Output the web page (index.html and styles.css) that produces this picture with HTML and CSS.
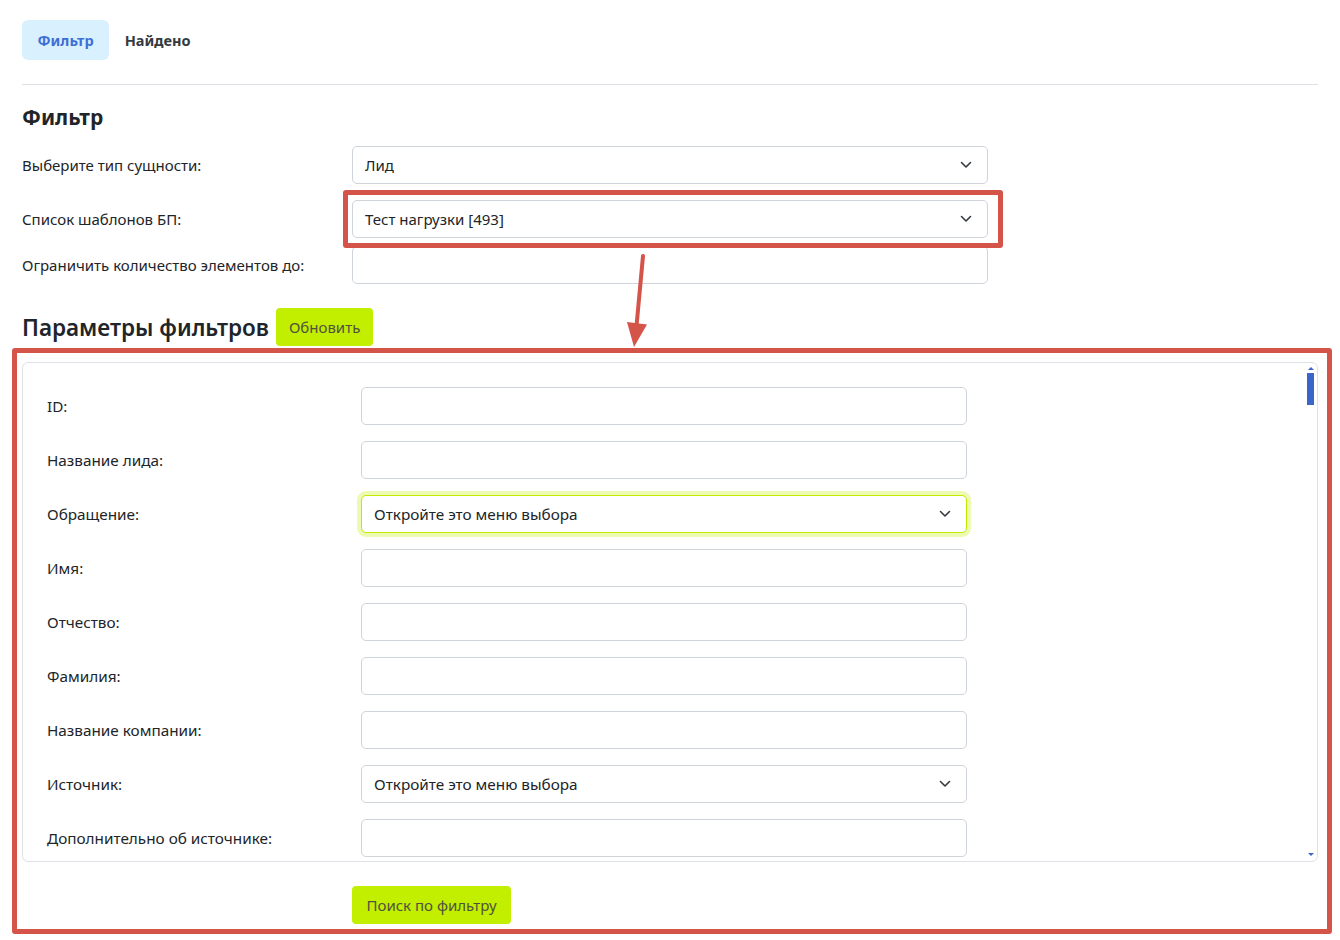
FILE: index.html
```html
<!DOCTYPE html>
<html lang="ru">
<head>
<meta charset="utf-8">
<title>Фильтр</title>
<link rel="stylesheet" href="styles.css">
</head>
<body>
<div class="page">
  <nav class="tabs">
    <a class="tab tab-active" href="#">Фильтр</a>
    <a class="tab" href="#">Найдено</a>
  </nav>
  <hr class="divider">

  <section class="filter">
    <h2 class="section-title">Фильтр</h2>
    <div class="field">
      <label class="field-label">Выберите тип сущности:</label>
      <div class="control select">
        <span>Лид</span>
        <svg class="chevron" width="12" height="8" viewBox="0 0 12 8"><polyline points="1.5,1.5 6,6 10.5,1.5" fill="none" stroke="#343a40" stroke-width="1.6" stroke-linecap="round" stroke-linejoin="round"/></svg>
      </div>
    </div>
    <div class="field field-tight">
      <label class="field-label">Список шаблонов БП:</label>
      <div class="control select marked">
        <span>Тест нагрузки [493]</span>
        <svg class="chevron" width="12" height="8" viewBox="0 0 12 8"><polyline points="1.5,1.5 6,6 10.5,1.5" fill="none" stroke="#343a40" stroke-width="1.6" stroke-linecap="round" stroke-linejoin="round"/></svg>
        <span class="mark-box mark-select"></span>
      </div>
    </div>
    <div class="field">
      <label class="field-label">Ограничить количество элементов до:</label>
      <input class="control input" type="text">
    </div>
  </section>

  <div class="params-head">
    <h2 class="params-title">Параметры фильтров</h2>
    <button class="btn-lime" type="button">Обновить</button>
  </div>

  <div class="params-body">
    <div class="params-scroll">
      <div class="param">
        <label class="param-label">ID:</label>
        <input class="param-control input" type="text">
      </div>
      <div class="param">
        <label class="param-label">Название лида:</label>
        <input class="param-control input" type="text">
      </div>
      <div class="param">
        <label class="param-label">Обращение:</label>
        <div class="param-control select select-focus">
          <span>Откройте это меню выбора</span>
          <svg class="chevron" width="12" height="8" viewBox="0 0 12 8"><polyline points="1.5,1.5 6,6 10.5,1.5" fill="none" stroke="#343a40" stroke-width="1.6" stroke-linecap="round" stroke-linejoin="round"/></svg>
        </div>
      </div>
      <div class="param">
        <label class="param-label">Имя:</label>
        <input class="param-control input" type="text">
      </div>
      <div class="param">
        <label class="param-label">Отчество:</label>
        <input class="param-control input" type="text">
      </div>
      <div class="param">
        <label class="param-label">Фамилия:</label>
        <input class="param-control input" type="text">
      </div>
      <div class="param">
        <label class="param-label">Название компании:</label>
        <input class="param-control input" type="text">
      </div>
      <div class="param">
        <label class="param-label">Источник:</label>
        <div class="param-control select">
          <span>Откройте это меню выбора</span>
          <svg class="chevron" width="12" height="8" viewBox="0 0 12 8"><polyline points="1.5,1.5 6,6 10.5,1.5" fill="none" stroke="#343a40" stroke-width="1.6" stroke-linecap="round" stroke-linejoin="round"/></svg>
        </div>
      </div>
      <div class="param">
        <label class="param-label">Дополнительно об источнике:</label>
        <input class="param-control input" type="text">
      </div>

      <div class="scrollbar">
        <span class="scroll-up"></span>
        <span class="scroll-thumb"></span>
        <span class="scroll-down"></span>
      </div>
    </div>

    <div class="params-actions">
      <button class="btn-lime btn-search" type="button">Поиск по фильтру</button>
    </div>

    <span class="mark-box mark-params"></span>
  </div>

  <!-- callout arrow from the template select down to the parameters block -->
  <svg class="callout-arrow" width="40" height="100" viewBox="0 0 40 100">
    <line x1="23" y1="6" x2="16.5" y2="76" stroke="#d4544a" stroke-width="4" stroke-linecap="round"/>
    <polygon points="7,72 27,74.5 14,97" fill="#d4544a"/>
  </svg>
</div>
</body>
</html>
```

FILE: styles.css
```css
* {
  box-sizing: border-box;
}

body {
  margin: 0;
  background: #ffffff;
  color: #212529;
  font-family: "Noto Sans", "Open Sans", sans-serif;
  font-size: 15px;
}

.page {
  position: relative;
  padding: 20px 22px 16px;
}

/* tabs */
.tabs {
  display: flex;
  height: 40px;
}

.tab {
  display: flex;
  align-items: center;
  padding: 0 15.5px;
  border-radius: 6px;
  font-size: 14.5px;
  font-weight: 700;
  color: #343a40;
  text-decoration: none;
}

.tab-active {
  background: #d9f0ff;
  color: #3d6fd6;
}

.divider {
  border: 0;
  border-top: 1px solid #dee2e6;
  margin: 24px 0 0;
}

/* filter form */
.section-title {
  margin: 19px 0 16px;
  font-size: 21px;
  line-height: 26px;
  font-weight: 700;
}

.field {
  display: flex;
  align-items: center;
  margin-bottom: 16px;
}

.field-tight {
  margin-bottom: 8px;
}

.field-label {
  width: 330px;
  flex: none;
}

.control {
  width: 636px;
  height: 38px;
}

.select,
.input {
  border: 1px solid #ced4da;
  border-radius: 5px;
  background: #ffffff;
  font: inherit;
  color: #212529;
}

.select {
  display: flex;
  align-items: center;
  justify-content: space-between;
  padding: 0 15px 0 12px;
}

.input {
  display: block;
  padding: 0 12px;
  outline: none;
}

.chevron {
  flex: none;
}

.marked {
  position: relative;
}

/* annotation boxes */
.mark-box {
  position: absolute;
  border: 5px solid #d4544a;
  border-radius: 3px;
  pointer-events: none;
}

.mark-select {
  top: -11px;
  left: -10px;
  right: -16px;
  bottom: -11px;
}

.mark-params {
  top: -14px;
  left: -10px;
  right: -14px;
  bottom: -10px;
}

.callout-arrow {
  position: absolute;
  left: 620px;
  top: 250px;
}

/* parameters */
.params-head {
  display: flex;
  align-items: center;
  gap: 7px;
  margin-top: 24px;
}

.params-title {
  margin: 0;
  font-size: 22.5px;
  line-height: 29px;
  font-weight: 600;
}

.btn-lime {
  height: 38px;
  padding: 0 13px;
  border: 0;
  border-radius: 4px;
  background: #c2ee00;
  color: #4f5240;
  font: inherit;
  font-size: 15px;
}

.btn-search {
  padding: 0 14.5px;
}

.params-body {
  position: relative;
  margin-top: 16px;
}

.params-scroll {
  position: relative;
  height: 500px;
  overflow: hidden;
  padding: 24px 24px 0;
  border: 1px solid #dee2e6;
  border-radius: 6px;
  font-size: 15.3px;
}

.param {
  display: flex;
  align-items: center;
  margin-bottom: 16px;
}

.param-label {
  width: 314px;
  flex: none;
}

.param-control {
  width: 606px;
  height: 38px;
}

.select-focus {
  border-color: #c2ea00;
  box-shadow: 0 0 0 4px rgba(194, 238, 0, 0.3);
}

.params-actions {
  padding: 24px 0 0 330px;
}

/* scroll bar of the parameter list */
.scrollbar {
  position: absolute;
  top: 4px;
  bottom: 5px;
  right: 2px;
  width: 8px;
}

.scroll-up,
.scroll-down {
  position: absolute;
  left: 1px;
  width: 0;
  height: 0;
  border-left: 3px solid transparent;
  border-right: 3px solid transparent;
}

.scroll-up {
  top: 0;
  border-bottom: 3px solid #3a66c8;
}

.scroll-down {
  bottom: 0;
  border-top: 3px solid #3a66c8;
}

.scroll-thumb {
  position: absolute;
  top: 6px;
  left: 0;
  width: 7px;
  height: 32px;
  background: #3a66c8;
}
```
